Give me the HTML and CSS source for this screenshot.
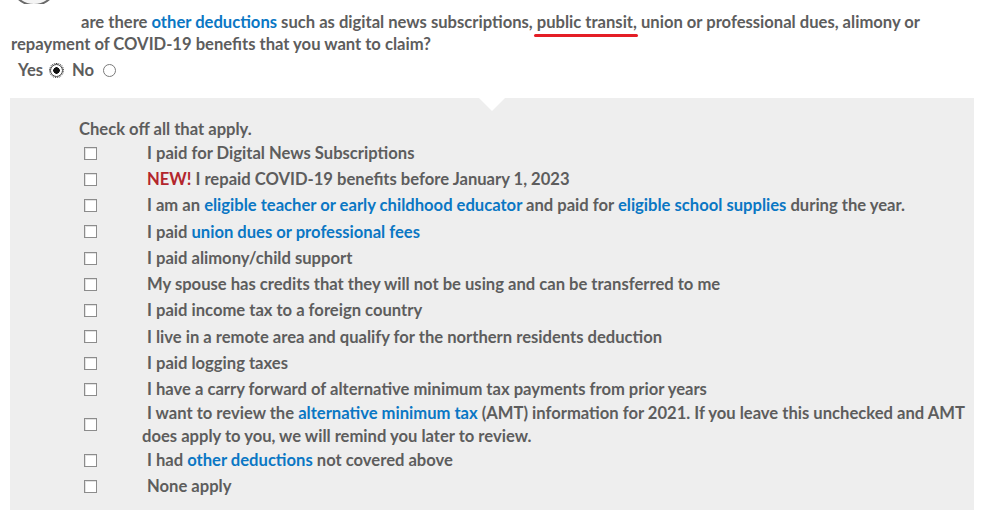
FILE: index.html
```html
<!DOCTYPE html>
<html>
<head>
	<link rel="stylesheet" href="styles.css">
</head>
<body>
	<div class="avatar"><div class="avatar-circle"></div></div>

	<p class="question">are there <a href="#">other deductions</a> such as digital news subscriptions, <span class="marked">public transit,</span> union or professional dues, alimony or repayment of COVID-19 benefits that you want to claim?</p>

	<div class="answer">
		<label>Yes<input type="radio" name="other" class="radio focused" checked></label>
		<label>No<input type="radio" name="other" class="radio"></label>
	</div>

	<div class="panel">
		<div class="panel-title">Check off all that apply.</div>
		<div class="item"><div class="cb-cell"><input type="checkbox"></div><div class="label">I paid for Digital News Subscriptions</div></div>
		<div class="item"><div class="cb-cell"><input type="checkbox"></div><div class="label"><span class="new">NEW!</span> I repaid COVID-19 benefits before January 1, 2023</div></div>
		<div class="item"><div class="cb-cell"><input type="checkbox"></div><div class="label">I am an <a href="#">eligible teacher or early childhood educator</a> and paid for <a href="#">eligible school supplies</a> during the year.</div></div>
		<div class="item"><div class="cb-cell"><input type="checkbox"></div><div class="label">I paid <a href="#">union dues or professional fees</a></div></div>
		<div class="item"><div class="cb-cell"><input type="checkbox"></div><div class="label">I paid alimony/child support</div></div>
		<div class="item"><div class="cb-cell"><input type="checkbox"></div><div class="label">My spouse has credits that they will not be using and can be transferred to me</div></div>
		<div class="item"><div class="cb-cell"><input type="checkbox"></div><div class="label">I paid income tax to a foreign country</div></div>
		<div class="item"><div class="cb-cell"><input type="checkbox"></div><div class="label">I live in a remote area and qualify for the northern residents deduction</div></div>
		<div class="item"><div class="cb-cell"><input type="checkbox"></div><div class="label">I paid logging taxes</div></div>
		<div class="item"><div class="cb-cell"><input type="checkbox"></div><div class="label">I have a carry forward of alternative minimum tax payments from prior years</div></div>
		<div class="item"><div class="cb-cell"><input type="checkbox"></div><div class="label">I want to review the <a href="#">alternative minimum tax</a> (AMT) information for 2021. If you leave this unchecked and AMT does apply to you, we will remind you later to review.</div></div>
		<div class="item"><div class="cb-cell"><input type="checkbox"></div><div class="label">I had <a href="#">other deductions</a> not covered above</div></div>
		<div class="item"><div class="cb-cell"><input type="checkbox"></div><div class="label">None apply</div></div>
	</div>
</body>
</html>
```
FILE: styles.css
```css
body {
	margin: 0;
	font-family: "Lato", "Open Sans", sans-serif;
	font-weight: 700;
	font-size: 16.6px;
	color: #5d5d5d;
	background: #fff;
}
a {
	color: #0a77c4;
	text-decoration: none;
}

.avatar {
	width: 48px;
	height: 4px;
	margin-left: 10px;
	overflow: hidden;
}
.avatar-circle {
	width: 44px;
	height: 44px;
	margin-top: -42px;
	border: 2px solid #6a6a6a;
	border-radius: 50%;
	background: #f4f4f4;
}

.question {
	margin: 7px 0 0;
	padding: 0 20px 0 11px;
	text-indent: 70px;
	line-height: 22.3px;
}
.marked {
	position: relative;
}
.marked::after {
	content: "";
	position: absolute;
	left: -3px;
	right: -1px;
	bottom: -5px;
	height: 3px;
	border-radius: 2px;
	background: #e41e26;
}

.answer {
	margin-top: 3px;
	padding-left: 18px;
	line-height: 22px;
	display: flex;
}
.answer label {
	display: flex;
	align-items: center;
}
.radio {
	appearance: none;
	width: 13px;
	height: 13px;
	margin: 1px 9px 0 7px;
	border: 1px solid #7a7a7a;
	border-radius: 50%;
	background: #fff;
}
.radio:checked {
	border-color: #444;
	background: radial-gradient(circle, #111 0 3px, #fff 3.5px);
}
.radio.focused {
	outline: 1px dotted #333;
	outline-offset: 0;
}
.answer label + label .radio {
	margin-left: 9px;
}

.panel {
	position: relative;
	margin: 17px 24px 0 10px;
	padding: 20px 6px 10px 69px;
	background: #eeeeee;
}
.panel::before {
	content: "";
	position: absolute;
	top: 0;
	left: 469px;
	border-left: 13px solid transparent;
	border-right: 13px solid transparent;
	border-top: 13px solid #fff;
}
.panel-title {
	line-height: 22.3px;
}

.item {
	display: flex;
	align-items: center;
	min-height: 26.25px;
}
.cb-cell {
	width: 63px;
	flex: none;
	display: flex;
	align-items: center;
}
.cb-cell input {
	appearance: none;
	width: 13px;
	height: 13px;
	margin: 0 0 0 5px;
	border: 1px solid #8c8c8c;
	background: #fff;
	box-shadow: inset 1px 1px 0 #e2e2e2;
}
.label {
	line-height: 22.4px;
	text-indent: 5px;
}
.new {
	color: #b3262c;
}
```
